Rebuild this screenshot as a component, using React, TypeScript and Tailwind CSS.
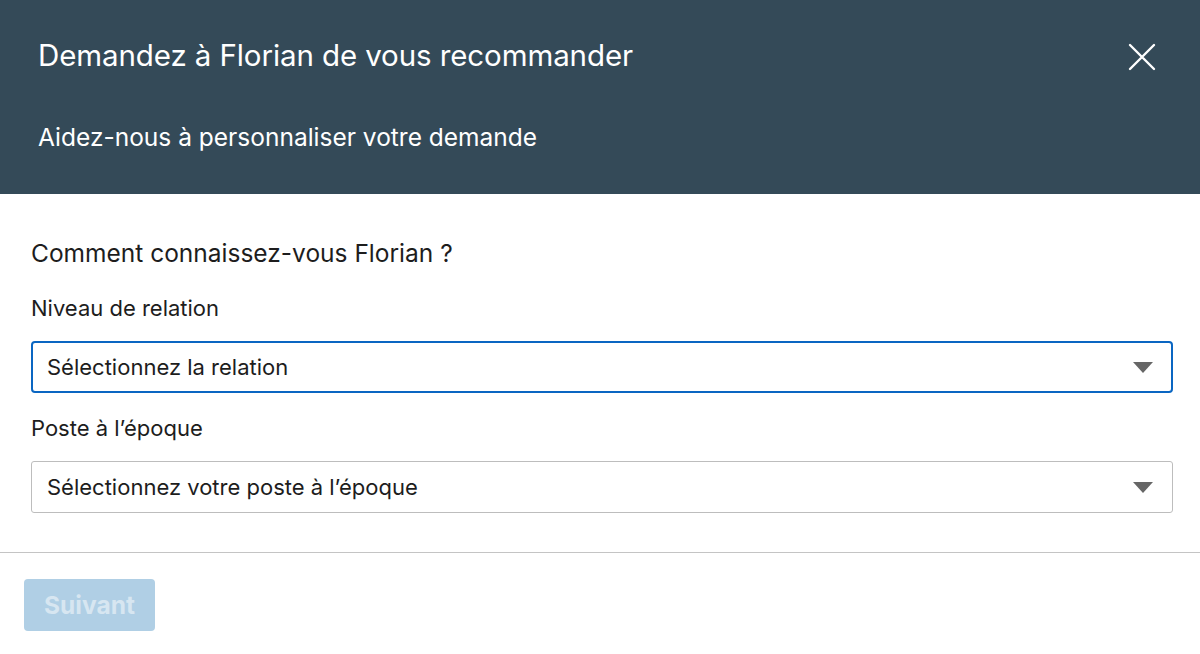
export default function App() {
  return (
    <div className="w-[1200px] h-[654px] bg-white font-['Inter','Noto_Sans',sans-serif] overflow-hidden">
      {/* Header */}
      <header className="bg-[#344a58] h-[194px] pl-[38px] pr-[44px] pt-[37px] text-white">
        <div className="flex items-start justify-between">
          <h1 className="text-[29.5px] leading-[36px] font-normal tracking-[-0.1px]">Demandez à Florian de vous recommander</h1>
          <button className="mt-[6px] text-white">
            <svg width="28" height="28" viewBox="0 0 28 28" fill="none" stroke="currentColor" strokeWidth="2.4" strokeLinecap="round">
              <path d="M2 2 L26 26 M26 2 L2 26" />
            </svg>
          </button>
        </div>
        <p className="mt-[48px] text-[24.5px] leading-[32px]">Aidez-nous à personnaliser votre demande</p>
      </header>

      {/* Form */}
      <div className="px-[31px] pt-[43px] pb-[39px] text-[#1d1d1d]">
        <h2 className="text-[24.5px] leading-[32px]">Comment connaissez-vous Florian ?</h2>
        <label className="block mt-[25px] text-[22px] leading-[28px]">Niveau de relation</label>
        <div className="mt-[19px] h-[52px] w-[1142px] border-2 border-[#0a66c2] rounded-[4px] flex items-center justify-between pl-[14px] pr-[18px]">
          <span className="text-[22px]">Sélectionnez la relation</span>
          <Caret />
        </div>
        <label className="block mt-[21px] text-[22px] leading-[28px]">Poste à l’époque</label>
        <div className="mt-[19px] h-[52px] w-[1142px] border border-[#bdbdbd] rounded-[3px] flex items-center justify-between pl-[15px] pr-[19px]">
          <span className="text-[22px]">Sélectionnez votre poste à l’époque</span>
          <Caret />
        </div>
      </div>

      <div className="h-px bg-[#c4c4c4]" />

      <div className="pl-[24px] pt-[26px]">
        <button className="h-[52px] w-[131px] rounded-[4px] bg-[#b0cfe5] text-[#d7e6f1] text-[24.5px] font-bold">Suivant</button>
      </div>
    </div>
  );
}

function Caret() {
  return (
    <svg width="20" height="11" viewBox="0 0 20 11">
      <path d="M0 0 L20 0 L10 11 Z" fill="#666666" />
    </svg>
  );
}
